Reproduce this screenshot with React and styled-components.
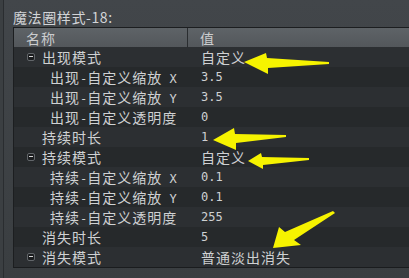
import React from 'react';
import styled, { createGlobalStyle } from 'styled-components';

const GlobalStyle = createGlobalStyle`
  html, body {
    margin: 0;
    padding: 0;
    background: #3b3f42;
    overflow: hidden;
  }
`;

const Window = styled.div`
  position: relative;
  width: 409px;
  height: 278px;
  box-sizing: border-box;
  border-left: 1px solid #2a2d30;
  margin-left: 3px;
  padding-left: 9px;
  background: linear-gradient(#42464a, #3a3e41);
  display: flex;
  flex-direction: column;
  overflow: hidden;
`;

const Title = styled.div`
  height: 27px;
  line-height: 34px;
  color: #d2d4d7;
  font-family: "Noto Sans CJK SC", "Noto Sans", sans-serif;
  font-size: 14px;
  letter-spacing: 0.6px;
  white-space: nowrap;
`;

const Table = styled.div`
  border-left: 1px solid #1c1e20;
  border-top: 1px solid #1c1e20;
  border-bottom: 1px solid #1a1c1e;
  font-family: "DejaVu Sans Mono", monospace;
  font-size: 12px;
  color: #cfd1d3;
`;

const Cjk = styled.span`
  font-family: "Noto Sans CJK SC", sans-serif;
  font-size: 14px;
  letter-spacing: 1px;
`;

const HeaderRow = styled.div`
  display: grid;
  grid-template-columns: 174px 1fr;
  height: 19px;
  background: linear-gradient(#5e6367, #53575b);
  color: #cbcdcf;
`;

const HeaderCell = styled.div`
  display: flex;
  align-items: center;
  padding-left: ${p => p.$pad}px;
  border-right: ${p => (p.$divider ? '1px solid #2a2d30' : 'none')};
  white-space: nowrap;
`;

const Row = styled.div`
  display: grid;
  grid-template-columns: 174px 1fr;
  height: 20px;
  background: ${p => (p.$alt ? '#26292b' : '#2c2f32')};
`;

const NameCell = styled.div`
  display: flex;
  align-items: center;
  padding-left: ${p => p.$indent}px;
  white-space: pre;
`;

const ValueCell = styled.div`
  display: flex;
  align-items: center;
  padding-left: 13px;
  white-space: pre;
`;

const Toggle = styled.span`
  position: relative;
  width: 6px;
  height: 6px;
  margin-right: 7px;
  border: 1px solid #62666a;
  border-radius: 2px;
  background: #1b1d1f;

  &::after {
    content: '';
    position: absolute;
    left: 1px;
    right: 1px;
    top: 2px;
    height: 1px;
    background: #d8d8d8;
  }
`;

const Arrows = styled.svg`
  position: absolute;
  left: -13px;
  top: 0;
  pointer-events: none;
`;

// split a label into CJK and latin runs, the CJK ones drawn larger
const Label = ({ text }) => (
  <span>
    {text.split(/([\u4e00-\u9fff]+)/).filter(Boolean).map((part, i) =>
      /[\u4e00-\u9fff]/.test(part) ? <Cjk key={i}>{part}</Cjk> : <span key={i}>{part}</span>
    )}
  </span>
);

const rows = [
  { name: '出现模式', value: '自定义', level: 0, toggle: true },
  { name: '出现-自定义缩放 X', value: '3.5', level: 1 },
  { name: '出现-自定义缩放 Y', value: '3.5', level: 1 },
  { name: '出现-自定义透明度', value: '0', level: 1 },
  { name: '持续时长', value: '1', level: 0 },
  { name: '持续模式', value: '自定义', level: 0, toggle: true },
  { name: '持续-自定义缩放 X', value: '0.1', level: 1 },
  { name: '持续-自定义缩放 Y', value: '0.1', level: 1 },
  { name: '持续-自定义透明度', value: '255', level: 1 },
  { name: '消失时长', value: '5', level: 0 },
  { name: '消失模式', value: '普通淡出消失', level: 0, toggle: true },
];

const arrows = [
  '253,62 275,53 276,58 338,62 338,64 277,68 277,74',
  '222,140 243,128 244,134 295,135 295,137 245,143 245,150',
  '257,161 270,153 271,157 318,158 318,160 272,165 272,169',
  '282,248 288,227 294,232 342,211 344,213 303,240 310,245',
];

export default function App() {
  return (
    <>
      <GlobalStyle />
      <Window>
        <Title>魔法圈样式-18:</Title>
        <Table>
          <HeaderRow>
            <HeaderCell $pad={12} $divider><Label text="名称" /></HeaderCell>
            <HeaderCell $pad={12}><Label text="值" /></HeaderCell>
          </HeaderRow>
          {rows.map((r, i) => (
            <Row key={i} $alt={i % 2 === 1}>
              <NameCell $indent={r.toggle ? 13 : r.level ? 36 : 28}>
                {r.toggle && <Toggle />}
                <Label text={r.name} />
              </NameCell>
              <ValueCell><Label text={r.value} /></ValueCell>
            </Row>
          ))}
        </Table>
        <Arrows width="409" height="278">
          {arrows.map((pts, i) => (
            <polygon key={i} points={pts} fill="#f6f300" />
          ))}
        </Arrows>
      </Window>
    </>
  );
}
